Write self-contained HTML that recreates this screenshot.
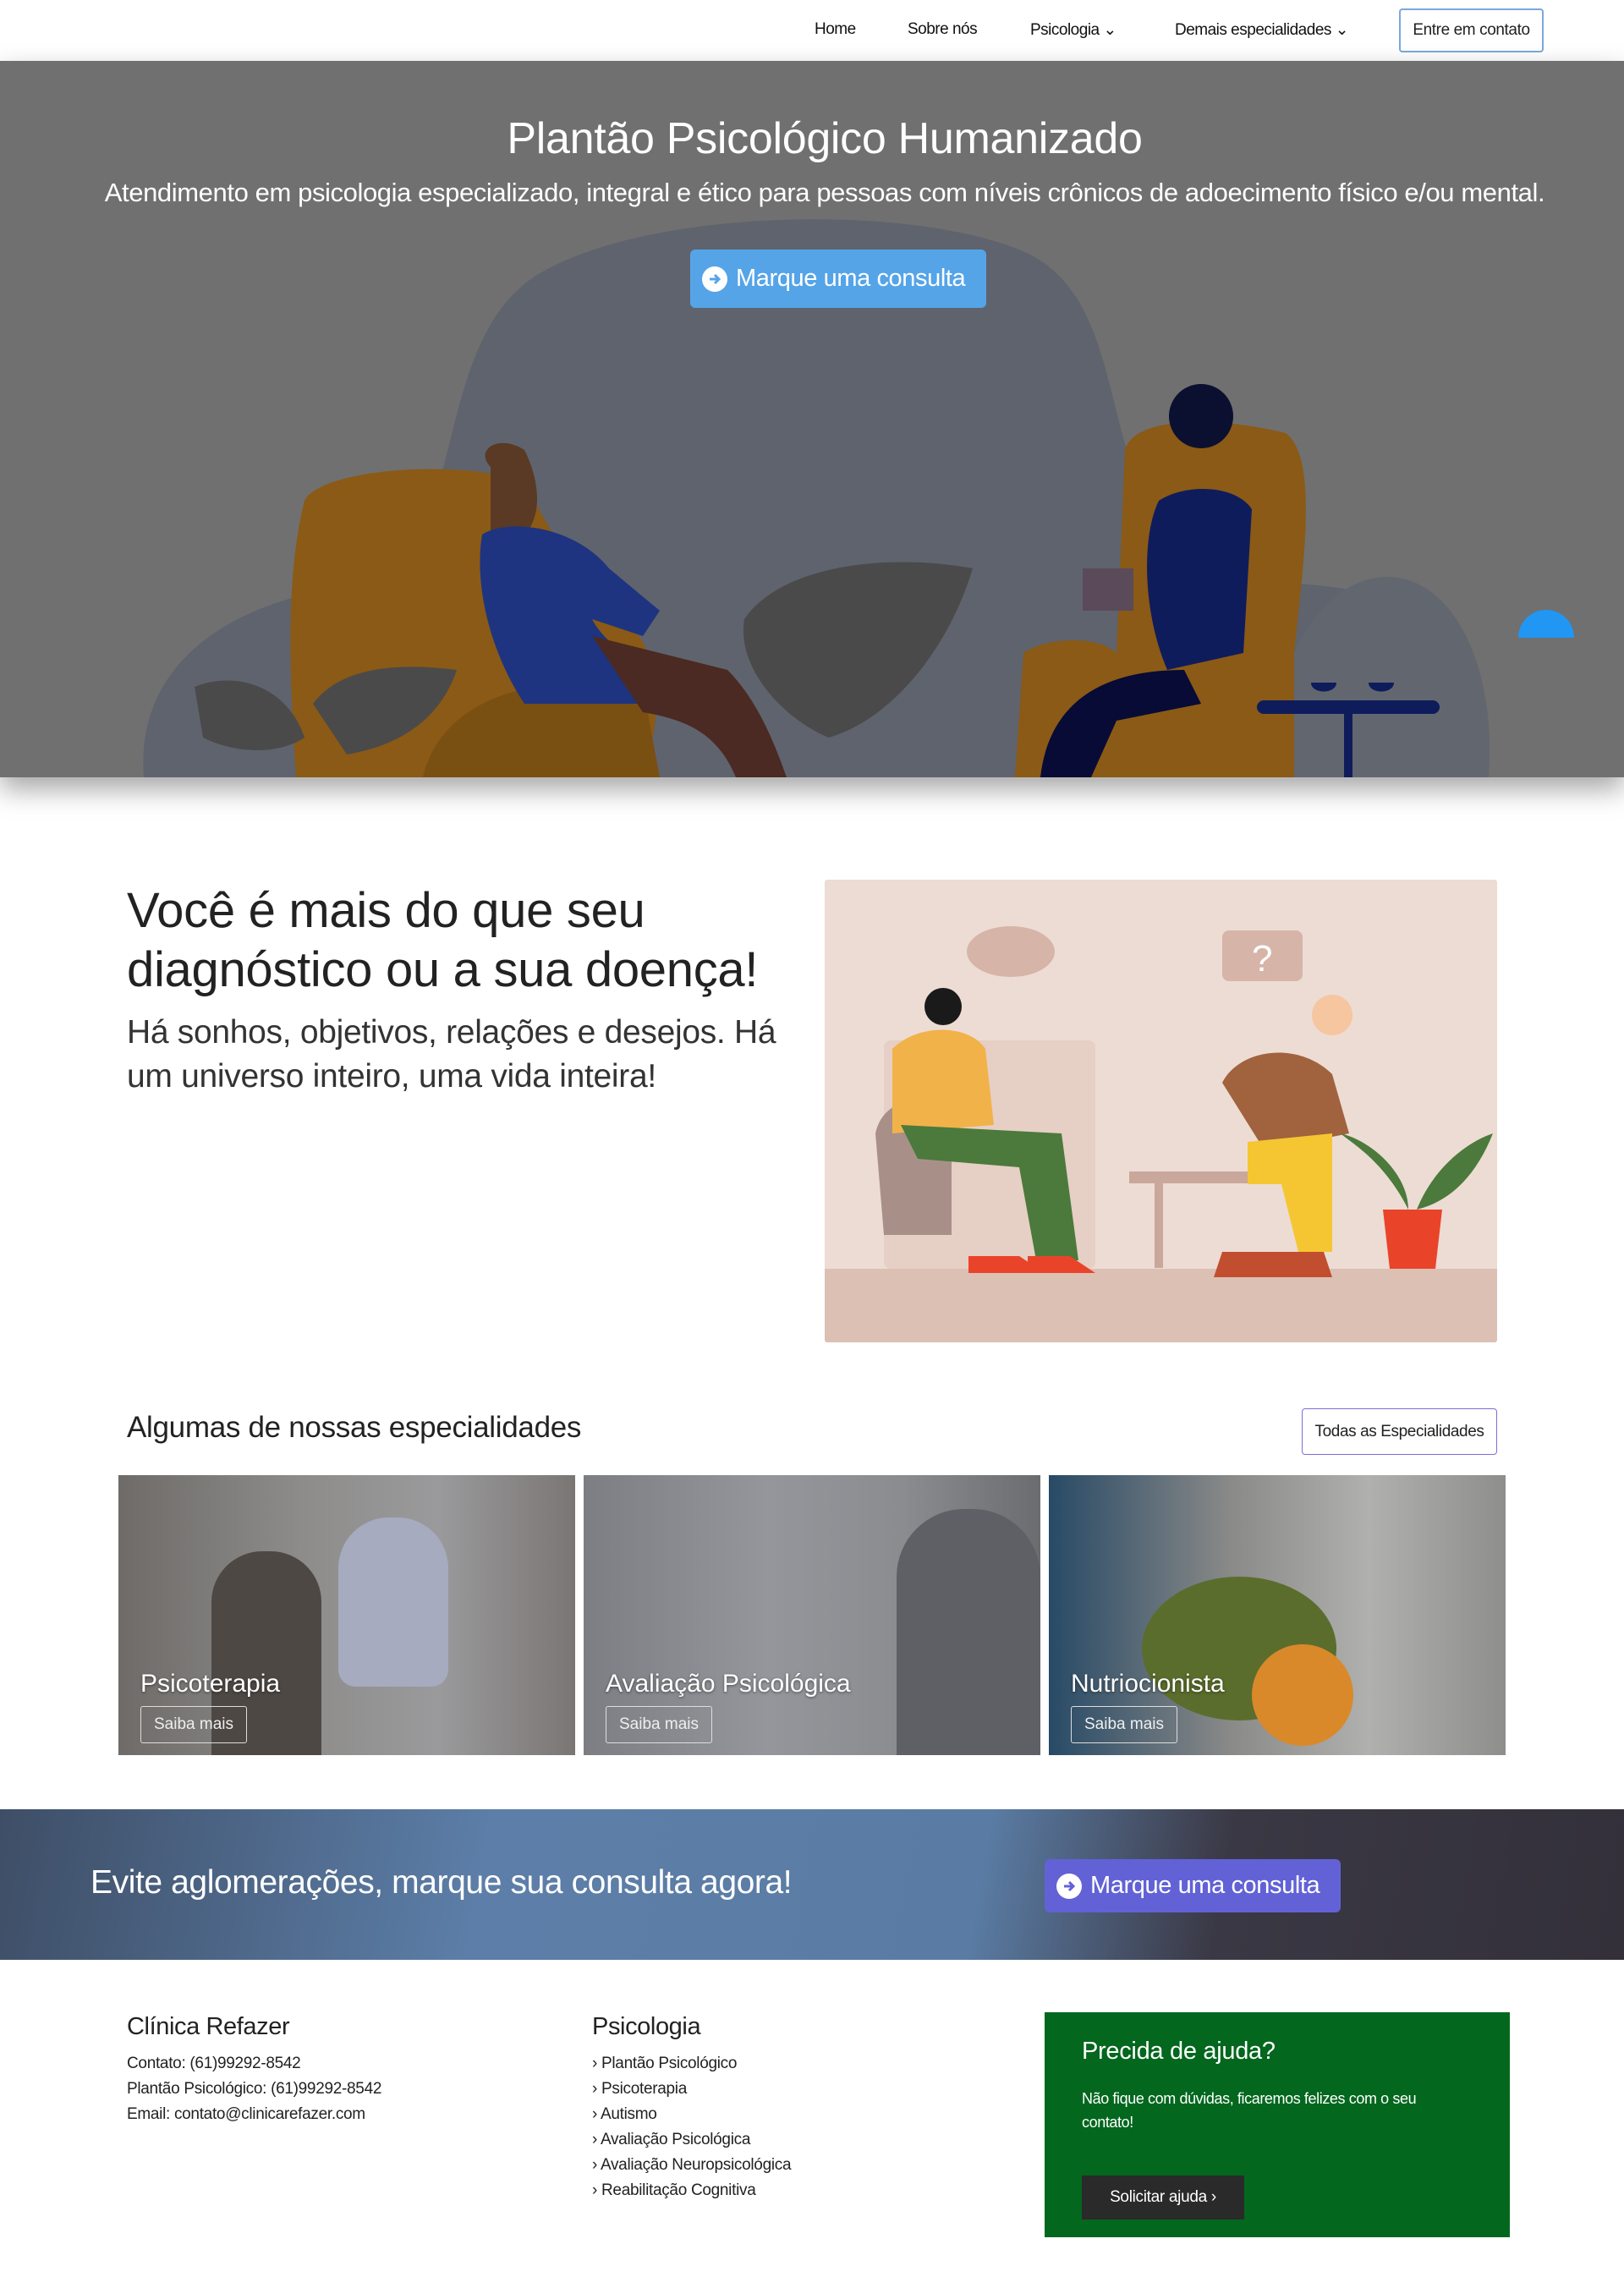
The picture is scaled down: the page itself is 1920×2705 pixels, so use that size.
<!DOCTYPE html>
<html><head><meta charset="utf-8"><style>
*{margin:0;padding:0;box-sizing:border-box}
body{width:1920px;height:2705px;font-family:"Liberation Sans",sans-serif;background:#fff;color:#222;position:relative;overflow:hidden}
.abs{position:absolute}
nav a{position:absolute;top:24px;font-size:19px;color:#111;letter-spacing:-0.5px;white-space:nowrap}
.hero{top:72px;left:0;width:1920px;height:847px;background:#707070;overflow:hidden;box-shadow:0 14px 30px rgba(0,0,0,.35)}
.h1{font-size:52px;color:#fff;width:1920px;text-align:center;top:62px;letter-spacing:-0.3px;padding-left:30px}
.sub{font-size:31px;color:#fff;width:1920px;text-align:center;top:138px;letter-spacing:-0.4px;padding-left:30px}
.btn{position:absolute;border-radius:6px;color:#fff;display:flex;align-items:center;white-space:nowrap}
.circ{width:30px;height:30px;border-radius:50%;background:#fff;display:inline-flex;align-items:center;justify-content:center;margin:0 10px 0 14px}
.card{position:absolute;top:1744px;width:540px;height:331px;overflow:hidden}
.card .t{position:absolute;left:26px;top:230px;font-size:30px;color:#fff;text-shadow:0 1px 3px rgba(0,0,0,.5)}
.card .s{position:absolute;left:26px;top:273px;width:126px;height:44px;border:1px solid #ddd;border-radius:3px;color:#eee;font-size:19px;display:flex;align-items:center;justify-content:center}
.f{font-size:19px;line-height:30px;color:#222;letter-spacing:-0.3px}
</style></head><body>
<nav>
<a style="left:963px">Home</a>
<a style="left:1073px">Sobre nós</a>
<a style="left:1218px">Psicologia ⌄</a>
<a style="left:1389px">Demais especialidades ⌄</a>
<div class="abs" style="left:1654px;top:10px;width:171px;height:52px;border:2px solid #7aa8dc;border-radius:4px;font-size:19px;display:flex;align-items:center;justify-content:center;letter-spacing:-0.4px">Entre em contato</div>
</nav>

<div class="abs hero">
<svg class="abs" style="left:0;top:0" width="1920" height="847">
<path d="M170 847 C160 720 260 640 420 620 C560 600 500 330 640 250 C780 170 1100 170 1220 230 C1330 290 1300 460 1380 560 C1440 640 1560 600 1640 640 C1760 700 1760 800 1760 847Z" fill="#5f636d"/>
<path d="M1500 847 C1500 720 1560 610 1640 610 C1720 610 1770 720 1760 847Z" fill="#62676f"/>
<path d="M360 520 C380 480 560 470 620 500 L700 640 C760 660 800 720 760 847 L350 847 C340 700 340 600 360 520Z" fill="#8a5a16"/>
<path d="M500 847 C520 760 620 720 760 740 L780 847Z" fill="#7a4f12"/>
<path d="M580 480 C560 460 590 440 620 460 C640 500 640 540 620 560 L580 560 Z" fill="#5a3a24"/>
<path d="M570 560 C600 540 680 550 720 600 L780 650 L760 680 L700 660 C720 700 780 720 800 760 L620 760 C580 700 560 620 570 560Z" fill="#1e3480"/>
<path d="M700 680 L860 720 C900 760 920 820 930 847 L870 847 C850 800 820 780 760 770 Z" fill="#4a2a22"/>
<path d="M1330 460 C1340 420 1440 420 1520 440 C1560 470 1540 600 1530 700 L1530 847 L1200 847 L1210 700 C1240 680 1300 680 1320 700Z" fill="#8a5a16"/>
<circle cx="1420" cy="420" r="38" fill="#0c1030"/>
<path d="M1370 520 C1400 500 1460 500 1480 530 L1470 700 L1380 720 C1350 650 1350 560 1370 520Z" fill="#0f1c5c"/>
<path d="M1230 847 C1240 760 1300 720 1400 720 L1420 760 L1320 780 L1290 847Z" fill="#070b35"/>
<rect x="1280" y="600" width="60" height="50" fill="#5a4a5a"/>
<rect x="1486" y="756" width="216" height="16" rx="8" fill="#0f1c5c"/>
<rect x="1589" y="770" width="10" height="77" fill="#0f1c5c"/>
<path d="M1550 735 h30 c0 14 -30 14 -30 0Z M1618 735 h30 c0 14 -30 14 -30 0Z" fill="#0f1c5c"/>
<path d="M880 660 C920 600 1040 580 1150 600 C1120 700 1050 780 980 800 C930 780 870 720 880 660Z" fill="#4a4a4a"/>
<path d="M230 740 C280 720 340 740 360 800 C330 820 280 820 240 800Z" fill="#4a4a4a"/>
<path d="M370 760 C400 720 460 710 540 720 C520 780 470 810 410 820Z" fill="#4a4a4a"/>
<path d="M1795 682 a33 33 0 0 1 66 0Z" fill="#2196f3"/>
</svg>
<div class="abs h1">Plantão Psicológico Humanizado</div>
<div class="abs sub">Atendimento em psicologia especializado, integral e ético para pessoas com níveis crônicos de adoecimento físico e/ou mental.</div>
<div class="btn" style="left:816px;top:223px;width:350px;height:69px;background:#55a4e8;font-size:29px;letter-spacing:-0.4px"><span class="circ"><svg width="20" height="20" viewBox="0 0 20 20"><path d="M4 10h11M10 5l5 5-5 5" stroke="#55a4e8" stroke-width="3" fill="none"/></svg></span>Marque uma consulta</div>
</div>

<div class="abs" style="left:150px;top:1042px;font-size:58px;line-height:70px;color:#222;letter-spacing:-0.3px">Você é mais do que seu<br>diagnóstico ou a sua doença!</div>
<div class="abs" style="left:150px;top:1195px;font-size:39px;line-height:52px;color:#333;letter-spacing:-0.3px">Há sonhos, objetivos, relações e desejos. Há<br>um universo inteiro, uma vida inteira!</div>

<div class="abs" style="left:975px;top:1040px;width:795px;height:547px;background:#eddcd3;overflow:hidden;border-radius:3px">
<svg width="795" height="547">
<rect y="460" width="795" height="87" fill="#dcc0b4"/>
<rect x="70" y="190" width="250" height="270" rx="8" fill="#e6cfc4"/>
<path d="M60 300 C70 250 140 250 150 290 L150 420 L70 420Z" fill="#a89088"/>
<path d="M80 200 C110 170 170 170 190 200 L200 290 L80 300Z" fill="#f2b24a"/>
<circle cx="140" cy="150" r="22" fill="#1a1a1a"/>
<path d="M90 290 L280 300 L300 450 L250 450 L230 340 L110 330Z" fill="#4b7a3c"/>
<path d="M170 445 h60 l30 20 h-90Z M240 445 h50 l30 20 h-80Z" fill="#e9442a"/>
<ellipse cx="220" cy="85" rx="52" ry="30" fill="#d6b4a8"/>
<rect x="470" y="60" width="95" height="60" rx="8" fill="#d6b4a8"/>
<text x="505" y="108" font-size="44" fill="#fff" font-family="Liberation Sans">?</text>
<rect x="360" y="345" width="160" height="14" fill="#c9a79a"/>
<rect x="390" y="359" width="10" height="100" fill="#c9a79a"/>
<path d="M470 240 C490 200 560 190 600 230 L620 300 L520 320Z" fill="#a0633e"/>
<path d="M500 310 L600 300 L600 440 L560 440 L540 360 L500 360Z" fill="#f5c632"/>
<circle cx="600" cy="160" r="24" fill="#f5c6a0"/>
<path d="M470 440 h70 l20 30 h-100Z M530 440 h60 l10 30 h-80Z" fill="#c14e2f"/>
<path d="M660 390 h70 l-8 70 h-54Z" fill="#e9442a"/>
<path d="M690 390 C660 330 620 310 610 300 C650 310 690 350 690 390Z M700 390 C720 340 760 310 790 300 C770 350 740 380 700 390Z" fill="#4b7a3c"/>
</svg></div>

<div class="abs" style="left:150px;top:1668px;font-size:35px;color:#222;letter-spacing:-0.3px">Algumas de nossas especialidades</div>
<div class="abs" style="left:1539px;top:1665px;width:231px;height:55px;border:1.5px solid #7b6fd6;border-radius:4px;font-size:19px;display:flex;align-items:center;justify-content:center;letter-spacing:-0.4px">Todas as Especialidades</div>

<div class="card" style="left:140px;background:linear-gradient(90deg,#6e6b68,#8d8c8a 40%,#9a9a9c 70%,#7a7674)"><div class="abs" style="left:110px;top:90px;width:130px;height:241px;background:#4e4844;border-radius:60px 60px 0 0"></div><div class="abs" style="left:260px;top:50px;width:130px;height:200px;background:#a6abbf;border-radius:60px 60px 20px 20px"></div><div class="t">Psicoterapia</div><div class="s">Saiba mais</div></div>
<div class="card" style="left:690px;background:linear-gradient(90deg,#7c7e84,#94969b 40%,#8a8c90 70%,#6a6c70)"><div class="abs" style="left:370px;top:40px;width:170px;height:291px;background:#5e6066;border-radius:80px 80px 0 0"></div><div class="t">Avaliação Psicológica</div><div class="s">Saiba mais</div></div>
<div class="card" style="left:1240px;background:linear-gradient(90deg,#284a66,#8a8a88 40%,#b0b0ae 70%,#8e8e8c)"><div class="abs" style="left:110px;top:120px;width:230px;height:170px;background:#5b6d2c;border-radius:50%"></div><div class="abs" style="left:240px;top:200px;width:120px;height:120px;background:#d9892a;border-radius:50%"></div><div class="t">Nutriocionista</div><div class="s">Saiba mais</div></div>

<div class="abs" style="left:0;top:2139px;width:1920px;height:178px;background:linear-gradient(100deg,#3e4e66 0%,#5c7ea8 30%,#5a7ca4 60%,#3a3844 75%,#33303a 100%)"></div>
<div class="abs" style="left:107px;top:2204px;font-size:39px;color:#fff;letter-spacing:-0.4px">Evite aglomerações, marque sua consulta agora!</div>
<div class="btn" style="left:1235px;top:2198px;width:350px;height:63px;background:#6262d6;font-size:29px;letter-spacing:-0.4px"><span class="circ"><svg width="20" height="20" viewBox="0 0 20 20"><path d="M4 10h11M10 5l5 5-5 5" stroke="#6262d6" stroke-width="3" fill="none"/></svg></span>Marque uma consulta</div>

<div class="abs" style="left:150px;top:2380px;font-size:29px;letter-spacing:-0.4px">Clínica Refazer</div>
<div class="abs f" style="left:150px;top:2425px">Contato: (61)99292-8542<br>Plantão Psicológico: (61)99292-8542<br>Email: contato@clinicarefazer.com</div>
<div class="abs" style="left:700px;top:2380px;font-size:29px;letter-spacing:-0.4px">Psicologia</div>
<div class="abs f" style="left:700px;top:2425px">› Plantão Psicológico<br>› Psicoterapia<br>› Autismo<br>› Avaliação Psicológica<br>› Avaliação Neuropsicológica<br>› Reabilitação Cognitiva</div>

<div class="abs" style="left:1235px;top:2379px;width:550px;height:266px;background:#03671e">
<div class="abs" style="left:44px;top:30px;font-size:29px;color:#fff;letter-spacing:-0.3px">Precida de ajuda?</div>
<div class="abs" style="left:44px;top:88px;width:440px;font-size:18px;line-height:28px;color:#fff;letter-spacing:-0.4px">Não fique com dúvidas, ficaremos felizes com o seu contato!</div>
<div class="abs" style="left:44px;top:193px;width:192px;height:52px;background:#2a2a2a;color:#fff;font-size:19px;display:flex;align-items:center;justify-content:center;letter-spacing:-0.3px">Solicitar ajuda ›</div>
</div>
</body></html>
